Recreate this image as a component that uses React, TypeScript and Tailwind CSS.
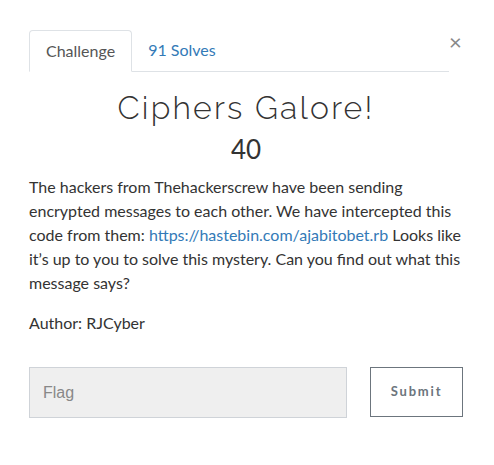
export default function App() {
  return (
    <div className="min-h-screen bg-white font-['Lato',sans-serif] text-[#333333]">
      <div className="relative px-[29px] pt-[30px]">
        {/* close */}
        <button className="absolute left-[449px] top-[31px] text-[22px] leading-none text-[#888888]">
          ×
        </button>

        {/* tabs */}
        <div className="flex w-[420px] border-b border-[#dee2e6]">
          <div className="-mb-px rounded-t-[4px] border border-[#dee2e6] border-b-white bg-white px-4 py-2 text-base leading-6 text-[#555555]">
            Challenge
          </div>
          <div className="px-4 py-2 text-base leading-6 text-[#337ab7]">
            91 Solves
          </div>
        </div>

        <div className="w-[434px]">
          <h2 className="mt-[17px] text-center font-['Raleway','Lato',sans-serif] text-[32px] font-light leading-[38px] tracking-[2.2px] text-[#333333]">
            Ciphers Galore!
          </h2>
          <h3 className="mt-[5px] text-center text-[26px] leading-[34px] text-[#333333]">
            40
          </h3>
          <p className="mt-[9px] text-base leading-6">
            The hackers from Thehackerscrew have been sending encrypted messages
            to each other. We have intercepted this code from them:{' '}
            <a className="text-[#337ab7]">https://hastebin.com/ajabitobet.rb</a>{' '}
            Looks like it’s up to you to solve this mystery. Can you find out
            what this message says?
          </p>
          <p className="mt-4 text-base leading-6">Author: RJCyber</p>
        </div>

        {/* flag form */}
        <div className="mt-[32px] flex items-start">
          <div className="flex h-[51px] w-[318px] items-center border border-[#cfd3d8] bg-[#efefef] px-[13px] font-['Liberation_Sans',Arial,sans-serif] text-base text-[#888888]">
            Flag
          </div>
          <button className="ml-[23px] h-[50px] w-[93px] border border-[#6c757d] text-[13px] font-bold tracking-[1.8px] text-[#6c757d]">
            Submit
          </button>
        </div>
      </div>
    </div>
  );
}
